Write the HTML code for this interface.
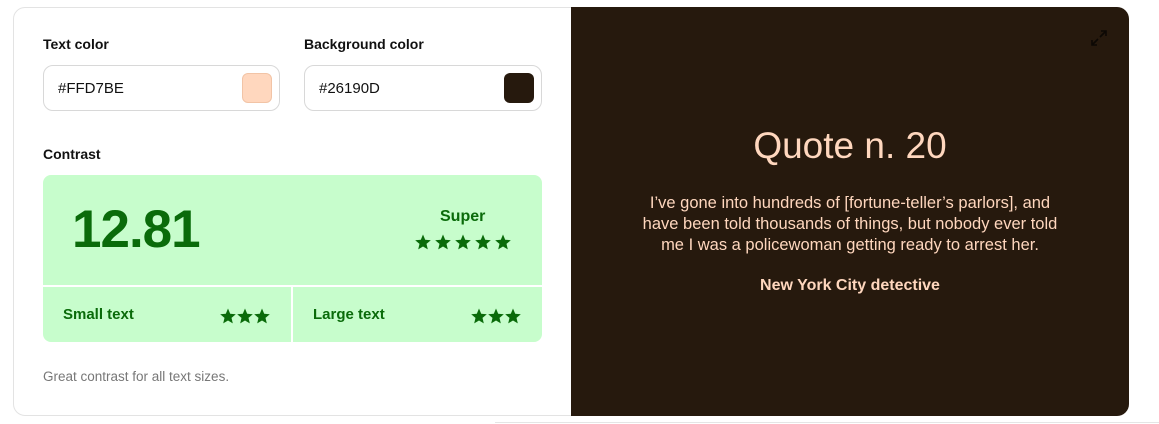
<!DOCTYPE html>
<html><head><style>
*{box-sizing:border-box;margin:0;padding:0}
body{width:1159px;height:424px;background:#fff;font-family:"Liberation Sans",sans-serif;position:relative;overflow:hidden}
.card{position:absolute;left:13px;top:7px;width:1116px;height:409px;border:1px solid #e3e3e3;border-radius:12px;background:#fff}
.dark{position:absolute;left:571px;top:7px;width:558px;height:409px;background:#26190D;border-radius:0 12px 12px 0}
.lbl{position:absolute;font-size:14px;font-weight:bold;color:#111}
.inp{position:absolute;top:65px;height:46px;border:1px solid #d8d8d8;border-radius:10px;font-size:15px;color:#111;padding:14px 0 0 14px}
.sw{position:absolute;top:7px;right:7px;width:30px;height:30px;border-radius:6px}
.g{position:absolute;background:#c7fdcc;color:#0a6b0a}
.star{fill:#0a6b0a}
.q{position:absolute;left:571px;width:558px;text-align:center;color:#FFD7BE}
</style></head><body>
<div class="card"></div>
<div style="position:absolute;left:495px;top:422px;width:664px;height:1px;background:#e5e5e5"></div>
<div class="lbl" style="left:43px;top:36px">Text color</div>
<div class="lbl" style="left:304px;top:36px">Background color</div>
<div class="inp" style="left:43px;width:237px">#FFD7BE<div class="sw" style="background:#FFD7BE;border:1px solid #f2c4a6"></div></div>
<div class="inp" style="left:304px;width:238px">#26190D<div class="sw" style="background:#26190D"></div></div>
<div class="lbl" style="left:43px;top:146px">Contrast</div>
<div class="g" style="left:43px;top:175px;width:499px;height:110px;border-radius:8px 8px 0 0">
<div style="position:absolute;left:29px;top:24px;font-size:53px;font-weight:bold;letter-spacing:-1px">12.81</div>
<div style="position:absolute;left:397px;top:33px;font-size:16px;font-weight:bold">Super</div>
<svg style="position:absolute;left:372px;top:59px" width="98" height="18" viewBox="0 0 98 18">
<g class="star"><path id="s" d="M8 0.5l2.2 5.2 5.6.5-4.3 3.7 1.3 5.5L8 12.5 3.2 15.4l1.3-5.5L.2 6.2l5.6-.5z"/>
<use href="#s" x="20"/><use href="#s" x="40"/><use href="#s" x="60"/><use href="#s" x="80"/></g></svg>
</div>
<div class="g" style="left:43px;top:287px;width:248px;height:55px;border-radius:0 0 0 8px">
<div style="position:absolute;left:20px;top:19px;font-size:15px;font-weight:bold">Small text</div>
<svg style="position:absolute;left:177px;top:21px" width="54" height="16" viewBox="0 0 54 16"><g class="star"><use href="#s"/><use href="#s" x="17"/><use href="#s" x="34"/></g></svg>
</div>
<div class="g" style="left:293px;top:287px;width:249px;height:55px;border-radius:0 0 8px 0">
<div style="position:absolute;left:20px;top:19px;font-size:15px;font-weight:bold">Large text</div>
<svg style="position:absolute;left:178px;top:21px" width="54" height="16" viewBox="0 0 54 16"><g class="star"><use href="#s"/><use href="#s" x="17"/><use href="#s" x="34"/></g></svg>
</div>
<div style="position:absolute;left:43px;top:369px;font-size:13.5px;color:#777">Great contrast for all text sizes.</div>
<div class="dark"></div>
<svg style="position:absolute;left:1089px;top:28px" width="20" height="20" viewBox="0 0 20 20" fill="none" stroke="#0c0804" stroke-width="1.6"><path d="M12 3h5v5M17 3l-6 6M8 17H3v-5M3 17l6-6"/></svg>
<div class="q" style="top:125px;font-size:37px">Quote n. 20</div>
<div class="q" style="top:193px;font-size:16.5px;line-height:21px">I’ve gone into hundreds of [fortune-teller’s parlors], and<br>have been told thousands of things, but nobody ever told<br>me I was a policewoman getting ready to arrest her.</div>
<div class="q" style="top:277px;font-size:16px;font-weight:bold">New York City detective</div>
</body></html>
